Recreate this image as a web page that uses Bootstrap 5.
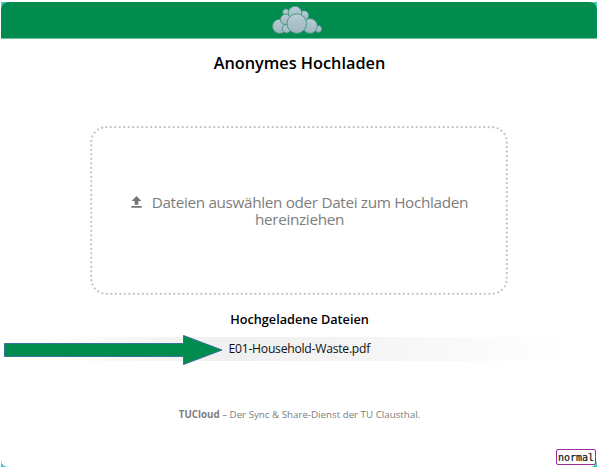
<!DOCTYPE html>
<html lang="de">
<head>
<meta charset="utf-8">
<meta name="viewport" content="width=device-width, initial-scale=1">
<title>Anonymes Hochladen</title>
<link href="https://cdn.jsdelivr.net/npm/bootstrap@5.3.0/dist/css/bootstrap.min.css" rel="stylesheet">
<style>
body { font-family: "Open Sans", "Noto Sans", sans-serif; height: 469px; padding: 2px 0 2px 1px; overflow: hidden; background: #fff; color: #111; }
.backdrop { height: 465px; background: linear-gradient(90deg, #45c4d8, #1fc89c 2%, #1fc89c 98%, #35c8c0); }
.window { background: #fff; border-radius: 7px; overflow: hidden; }
.topbar { height: 37px; background: #008c4f; border-bottom: 1px solid #70bd98; }
.topbar svg { margin: 4px 0 0 -2px; }
.page-title { font-size: 16.3px; font-weight: 600; line-height: 24px; margin: 12px 0 0; padding-left: 1px; color: #000; }
.dropzone { width: 418px; height: 169px; margin-top: 51px; margin-left: 89px; font-size: 15.3px; letter-spacing: -.34px; line-height: 17.4px; color: #7d7d7d; padding: 68px 0 0 1px; }
.dropzone .outline { left: 0; top: -.5px; }
.dropzone .upload { margin: -3px 6px 0 0; }
.files-title { font-size: 12.7px; font-weight: 600; line-height: 18px; margin: 15px 0 0; padding-left: 1px; color: #000; }
.file-row { height: 24px; margin-top: 9px; padding-left: 227.5px; font-size: 12.2px; letter-spacing: -.26px; line-height: 24px; background: linear-gradient(90deg, #fff 8%, #f0f0f0 35%, #f0f0f0 43%, #fff 96%); color: #111; }
.pointer { left: 2px; top: -3px; }
.tagline { font-size: 9.75px; line-height: 14px; margin-top: 47px; padding-left: 1px; color: #7d7d7d; }
.tagline strong { font-weight: 700; }
.mode { right: 1px; bottom: 4px; width: 40px; height: 16px; border: 1px solid #9b2f9f; border-radius: 2px; background: #fff; font: 10px/15px "DejaVu Sans Mono", monospace; color: #111; -webkit-text-stroke: .2px #111; }
</style>
<script src="https://cdn.jsdelivr.net/npm/bootstrap@5.3.0/dist/js/bootstrap.bundle.min.js"></script>
</head>
<body class="position-relative">
<div class="backdrop">
  <div class="window h-100 d-flex flex-column">
    <header class="topbar d-flex justify-content-center align-items-start flex-shrink-0">
      <svg width="52" height="28" viewBox="0 0 52 28" aria-label="Cloud">
        <defs><linearGradient id="cloud" x1="0" y1="0" x2="0" y2="1"><stop offset="0" stop-color="#b9cdd5"/><stop offset="1" stop-color="#9bb5bf"/></linearGradient></defs>
        <g fill="url(#cloud)" stroke="#378f75" stroke-width=".8">
          <circle cx="14" cy="6.3" r="3.4"/><circle cx="32" cy="9.5" r="4.8"/><circle cx="23" cy="7" r="6.8"/>
          <circle cx="7.7" cy="20.4" r="7.2"/><circle cx="46.4" cy="23" r="3.4"/><circle cx="38" cy="20" r="7.4"/>
          <circle cx="13.6" cy="13.5" r="5.3"/><circle cx="14.5" cy="22.8" r="4.3"/><circle cx="24.8" cy="17.6" r="9.8"/>
        </g>
      </svg>
    </header>
    <main>
      <h1 class="page-title text-center">Anonymes Hochladen</h1>
      <div class="dropzone position-relative text-center">
        <svg class="outline position-absolute" width="418" height="169" viewBox="0 0 418 169" fill="none">
          <rect x="1.2" y="1.2" width="415.6" height="166.6" rx="15" stroke="#c3c3c3" stroke-width="2.3" stroke-linecap="round" stroke-dasharray="0 4.5"/>
        </svg>
        <svg class="upload" width="11" height="12" viewBox="0 0 11 12" fill="#757575"><path d="M5.5 0 10.3 5H7.4V8.7H3.6V5H.7zM.3 10h10.4v1.8H.3z"/></svg>
        Dateien auswählen oder Datei zum Hochladen<br>hereinziehen
      </div>
      <h2 class="files-title text-center">Hochgeladene Dateien</h2>
      <div class="file-row position-relative">
        <svg class="pointer position-absolute" width="222" height="32" viewBox="0 0 222 32"><path d="M1.5 9.5H180.5V1.5L219 16 180.5 30.5V22.5H1.5z" fill="#008c4f" stroke="#37719c" stroke-width="1"/></svg>
        E01-Household-Waste.pdf
      </div>
      <footer class="tagline text-center"><strong>TUCloud</strong> – Der Sync &amp; Share-Dienst der TU Clausthal.</footer>
    </main>
  </div>
</div>
<div class="mode position-absolute text-center">normal</div>
</body>
</html>
